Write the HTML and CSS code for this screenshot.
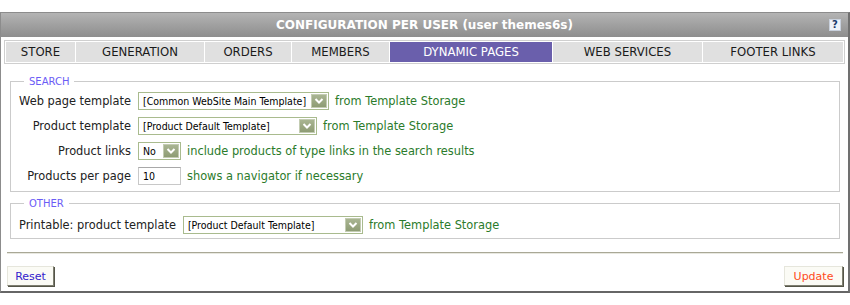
FILE: index.html
```html
<!DOCTYPE html>
<html>
<head>
<meta charset="utf-8">
<link rel="stylesheet" href="styles.css">
</head>
<body>
<div class="panel">
  <div class="header">
    <span class="title">CONFIGURATION PER USER (user themes6s)</span>
    <span class="help">?</span>
  </div>
  <div class="tabs">
    <div class="tab t1">STORE</div>
    <div class="tab t2">GENERATION</div>
    <div class="tab t3">ORDERS</div>
    <div class="tab t4">MEMBERS</div>
    <div class="tab t5 active">DYNAMIC PAGES</div>
    <div class="tab t6">WEB SERVICES</div>
    <div class="tab t7">FOOTER LINKS</div>
  </div>
  <div class="content">
    <fieldset class="box">
      <legend>SEARCH</legend>
      <div class="grid">
        <label class="lbl">Web page template</label>
        <div class="ctl">
          <span class="sel w1"><span class="val">[Common WebSite Main Template]</span><span class="arr"><svg width="10" height="8" viewBox="0 0 10 8"><path d="M1.5 2 L5 5.5 L8.5 2" fill="none" stroke="#fff" stroke-width="2"/></svg></span></span>
          <span class="note">from Template Storage</span>
        </div>
        <label class="lbl">Product template</label>
        <div class="ctl">
          <span class="sel w2"><span class="val">[Product Default Template]</span><span class="arr"><svg width="10" height="8" viewBox="0 0 10 8"><path d="M1.5 2 L5 5.5 L8.5 2" fill="none" stroke="#fff" stroke-width="2"/></svg></span></span>
          <span class="note">from Template Storage</span>
        </div>
        <label class="lbl">Product links</label>
        <div class="ctl">
          <span class="sel w3"><span class="val">No</span><span class="arr"><svg width="10" height="8" viewBox="0 0 10 8"><path d="M1.5 2 L5 5.5 L8.5 2" fill="none" stroke="#fff" stroke-width="2"/></svg></span></span>
          <span class="note">include products of type links in the search results</span>
        </div>
        <label class="lbl">Products per page</label>
        <div class="ctl">
          <span class="inp">10</span>
          <span class="note">shows a navigator if necessary</span>
        </div>
      </div>
    </fieldset>
    <fieldset class="box other">
      <legend>OTHER</legend>
      <div class="ctl">
        <label class="lbl2">Printable: product template</label>
        <span class="sel w4"><span class="val">[Product Default Template]</span><span class="arr"><svg width="10" height="8" viewBox="0 0 10 8"><path d="M1.5 2 L5 5.5 L8.5 2" fill="none" stroke="#fff" stroke-width="2"/></svg></span></span>
        <span class="note">from Template Storage</span>
      </div>
    </fieldset>
  </div>
  <div class="rule"></div>
  <div class="buttons">
    <button class="btn reset">Reset</button>
    <button class="btn update">Update</button>
  </div>
</div>
</body>
</html>
```
FILE: styles.css
```css
* { box-sizing: border-box; }
body {
  margin: 0;
  background: #fff;
  font-family: "DejaVu Sans", Verdana, sans-serif;
  font-size: 11.4px;
  color: #222;
}
.panel {
  margin-top: 12px;
  width: 850px;
  height: 281px;
  border: 1px solid #8c8c8c;
  border-right: 2px solid #707070;
  border-bottom: 2px solid #666;
}
.header {
  height: 24px;
  background: linear-gradient(#b4b4b4, #a2a2a2 45%, #8e8e8e);
  display: flex;
  align-items: center;
  justify-content: center;
  position: relative;
}
.title {
  color: #fff;
  font-weight: bold;
  font-size: 12px;
}
.help {
  position: absolute;
  right: 7px;
  top: 6px;
  width: 12px;
  height: 12px;
  background: #eef2f8;
  border: 1px solid #c8d0dc;
  color: #1a3a6a;
  font-weight: bold;
  font-size: 10px;
  line-height: 10px;
  text-align: center;
}
.tabs {
  margin: 3px 3px 0 3px;
  border: 1px solid #cfcfcf;
  padding: 1px;
  display: flex;
  gap: 1px;
  background: #fff;
}
.tab {
  height: 20px;
  background: #e0e0e0;
  display: flex;
  align-items: center;
  justify-content: center;
  color: #1a1a1a;
  font-size: 11.7px;
}
.tab.active { background: #6a5fac; color: #fff; }
.t1 { width: 69px; }
.t2 { width: 128px; }
.t3 { width: 86px; }
.t4 { width: 97px; }
.t5 { width: 162px; }
.t6 { width: 149px; }
.t7 { flex: 1; }
.content {
  padding: 0 8px 0 9px;
}
.box {
  margin: 12px 0 0 0;
  border: 1px solid #cbcbcb;
  padding: 5px 8px 6px 8px;
  min-width: 0;
}
.box legend {
  font-size: 10px;
  color: #6b5cf6;
  padding: 0 5px;
  margin-left: 5px;
}
.grid {
  display: grid;
  grid-template-columns: 112px 1fr;
  grid-auto-rows: 18px;
  column-gap: 7px;
  row-gap: 7px;
  align-items: center;
}
.lbl { text-align: right; white-space: nowrap; }
.ctl {
  display: flex;
  align-items: center;
  gap: 6px;
  height: 18px;
  white-space: nowrap;
}
.sel {
  height: 18px;
  border: 1px solid #a9bb8e;
  background: #fff;
  display: flex;
  align-items: center;
  justify-content: space-between;
  padding: 0 1px 0 4px;
  color: #000;
  font-family: "DejaVu Sans Condensed", "DejaVu Sans", sans-serif;
  font-size: 10.5px;
  overflow: hidden;
}
.val { white-space: nowrap; overflow: hidden; }
.w1 { width: 191px; }
.w2 { width: 179px; }
.w3 { width: 43px; }
.w4 { width: 180px; }
.arr {
  flex: none;
  width: 16px;
  height: 14px;
  background: linear-gradient(#a9b592, #8e9c74);
  border: 1px solid #c3ccb2;
  display: flex;
  align-items: center;
  justify-content: center;
}
.inp {
  width: 43px;
  height: 18px;
  border: 1px solid #c8c8c8;
  border-top-color: #a8a8a8;
  padding: 0 4px;
  display: flex;
  align-items: center;
  color: #000;
  font-family: "DejaVu Sans Condensed", "DejaVu Sans", sans-serif;
  font-size: 10.5px;
}
.note { color: #2b7b2b; }
.other { margin-top: 6px; padding: 7px 8px 4px 8px; }
.other .ctl { gap: 6px; }
.lbl2 { margin-right: 1px; }
.rule {
  margin: 13px 5px 0 6px;
  height: 2px;
  border-top: 1px solid #a9a896;
  border-bottom: 1px solid #e8e8e0;
}
.buttons {
  display: flex;
  justify-content: space-between;
  padding: 0 5px 0 6px;
  margin-top: 12px;
}
.btn {
  height: 20px;
  font-family: "DejaVu Sans", Verdana, sans-serif;
  font-size: 11px;
  background: #fbfbf5;
  border: 1px solid;
  border-color: #e6e6dc #7e7e70 #7e7e70 #e6e6dc;
  box-shadow: 1px 1px 0 #555548;
  padding: 0 7px;
}
.reset { color: #3322cc; width: 47px; }
.update { color: #ff4a1a; width: 59px; }
```
